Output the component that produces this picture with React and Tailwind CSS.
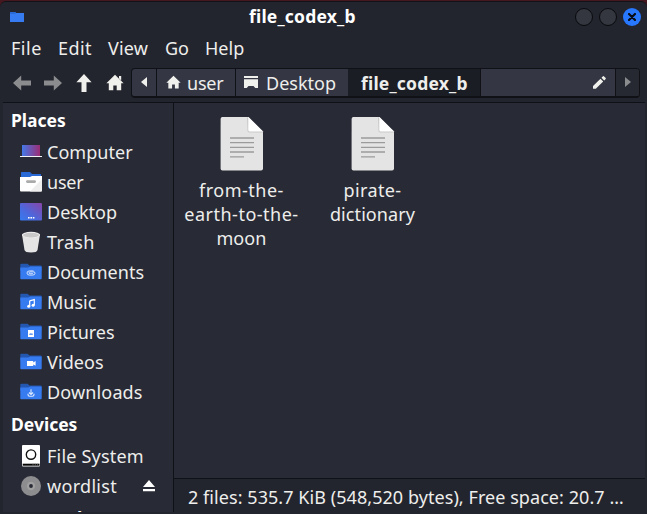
import React from "react";

function Folder({ children }) {
  return (
    <svg width="22" height="22" viewBox="0 0 22 22">
      <path d="M0.3 3.6Q0.3 2.8 1.1 2.8H7.6L9.5 4.4H20.8Q21.5 4.4 21.5 5.2V10H.3z" fill="#2457b0" />
      <path d="M0.3 6.6H8L10.4 5.4H21.7V17.6Q21.7 18.3 21 18.3H1Q.3 18.3 .3 17.6z" fill="#367bf0" />
      {children}
    </svg>
  );
}

const icons = {
  Computer: (
    <svg width="22" height="22" viewBox="0 0 22 22">
      <defs><linearGradient id="pc"><stop stopColor="#4478e8" /><stop offset="1" stopColor="#9c2d75" /></linearGradient></defs>
      <rect x="2" y="4" width="18" height="11" fill="url(#pc)" />
      <rect x="0" y="15" width="22" height="1" fill="#f4f4f4" />
    </svg>
  ),
  user: (
    <svg width="22" height="22" viewBox="0 0 22 22">
      <path d="M1 1.8Q1 1 1.8 1H10L12 3H21V8H1z" fill="#2869d6" />
      <path d="M0 6H10L12 5H22V19.5Q22 20.5 21 20.5H1Q0 20.5 0 19.5z" fill="#fff" />
      <path d="M22 8V19.5Q22 20.5 21 20.5H10z" fill="#eee" />
      <rect x="6" y="9.3" width="10" height="2.6" rx="1.3" fill="#aaa" />
    </svg>
  ),
  Desktop: (
    <svg width="22" height="22" viewBox="0 0 22 22">
      <defs><linearGradient id="dt" x1="0" y1="1" x2="1" y2="0"><stop stopColor="#367bf0" /><stop offset=".4" stopColor="#4c68dd" /><stop offset="1" stopColor="#8745a8" /></linearGradient></defs>
      <rect y="2" width="22" height="17.6" rx="1" fill="url(#dt)" />
      <path d="M8 16h1.6v1.6H8zM10.4 16H12v1.6h-1.6zM12.8 16h1.6v1.6h-1.6z" fill="#fff" />
    </svg>
  ),
  Trash: (
    <svg width="22" height="22" viewBox="0 0 22 22">
      <path d="M2 3.5L4.5 19Q5 21.5 11 21.5T17.5 19L20 3.5z" fill="#e5e5e5" />
      <ellipse cx="11" cy="3.8" rx="9" ry="3" fill="#f1f1f1" />
      <ellipse cx="11" cy="4.1" rx="8" ry="2.4" fill="#c9c9c9" />
    </svg>
  ),
  Documents: (
    <Folder><path d="M13.5 9.9H9.5Q7 9.9 7 12T9.5 14.1H12.5Q15 14.1 15 12.2T12.7 10.9H10Q9 10.9 9 11.8T10 12.7H13" fill="none" stroke="#dfeaff" strokeWidth=".9" /></Folder>
  ),
  Music: (
    <Folder><path d="M9.7 9.8L14.3 8.6V14.2M9.7 9.8V15.3" fill="none" stroke="#fff" strokeWidth="1.2" /><circle cx="8.7" cy="15.2" r="1.5" fill="#fff" /><circle cx="13.1" cy="14.2" r="1.5" fill="#fff" /></Folder>
  ),
  Pictures: (
    <Folder><rect x="8" y="9" width="6" height="7" fill="#fff" /><path d="M9 13.7L10.2 12.1L11 13L12 12L13 13.7z" fill="#367bf0" /></Folder>
  ),
  Videos: (
    <Folder><path d="M7 9.9H13.2V11.4L15.6 10.1V14.7L13.2 13.4V15H7z" fill="#fff" /></Folder>
  ),
  Downloads: (
    <Folder><path d="M11 8.3V13.4M9 11.5L11 13.5L13 11.5M8 12.8V13.5Q8 15.2 9.5 15.2H12.5Q14 15.2 14 13.5V12.8" fill="none" stroke="#dfeaff" strokeWidth="1.1" /></Folder>
  ),
  "File System": (
    <svg width="22" height="22" viewBox="0 0 22 22">
      <rect x="2" y="0" width="18" height="21.5" rx="1" fill="#fff" />
      <circle cx="11" cy="9.6" r="4.7" fill="none" stroke="#111" strokeWidth="1.4" />
      <rect x="2.7" y="18.7" width="16.8" height="2" fill="#050505" />
      <path d="M13 18.7v2M15.3 18.7v2M17.6 18.7v2" stroke="#777" strokeWidth=".7" />
    </svg>
  ),
  wordlist: (
    <svg width="22" height="22" viewBox="0 0 22 22">
      <circle cx="11" cy="11" r="10" fill="#8d8d90" /><circle cx="11" cy="11" r="4.2" fill="#a0a0a0" /><circle cx="11" cy="11" r="1.9" fill="#282a35" />
    </svg>
  ),
};

const places = [
  ["Computer", "tracking-[0.05px]"],
  ["user", "tracking-[-0.2px]"],
  ["Desktop", ""],
  ["Trash", "tracking-[0.35px]"],
  ["Documents", ""],
  ["Music", ""],
  ["Pictures", ""],
  ["Videos", "tracking-[0.1px]"],
  ["Downloads", "tracking-[0.15px]"],
];

function Place({ name, tracking, children }) {
  return (
    <div className="flex h-[30px] items-center pl-[17px]">
      <span className="w-[22px] shrink-0">{icons[name]}</span>
      <span className={`ml-[5px] ${tracking}`}>{name}</span>
      {children}
    </div>
  );
}

function Heading({ children }) {
  return <h2 className="flex h-[34px] items-center pl-[8px] text-[17.5px] font-bold text-white">{children}</h2>;
}

function Home({ chimney }) {
  return (
    <svg width="18" height="18" viewBox="0 0 18 18" fill="#f0f0ec">
      <path d="M9 .8L17.6 9.2H15.2V16.3H10.7V11.5H7.3V16.3H2.8V9.2H.4z" />
      {chimney && <path d="M13 2h2.2v4.5L13 4.4z" />}
    </svg>
  );
}

function Arrow({ turn, fill }) {
  return (
    <svg width="18" height="18" viewBox="0 0 18 18" className={turn} fill={fill}>
      <path d="M9 0L16.6 8.2H11.5V18H6.5V8.2H1.4z" />
    </svg>
  );
}

function File({ className, lines }) {
  return (
    <div className={className}>
      <svg width="44" height="56" viewBox="0 0 44 56">
        <path d="M2.4 1H28.5L43 15.5V52.6Q43 54.5 41.1 54.5H2.4Q.6 54.5 .6 52.6V3Q.6 1 2.4 1z" fill="#e4e4e4" />
        <path d="M27 1L27.5 14.8Q27.5 16.5 29.2 16.5H43V15.5z" fill="#c9c9c9" />
        <path d="M28.3 1L43 15.5H29.8Q28.3 15.5 28.3 14z" fill="#fff" />
        <path d="M10 22H34M10 26.7H34M10 31.3H34M10 36H34M10 40.8H24" stroke="#9b9b9b" strokeWidth="1.3" />
      </svg>
      <div className="mt-[6px] flex flex-col items-center leading-6 whitespace-nowrap">
        {lines.map(([text, style]) => <span key={text} className={style}>{text}</span>)}
      </div>
    </div>
  );
}

export default function App() {
  return (
    <div className="h-[514px] w-[647px] overflow-hidden bg-[#451820] pt-px font-['Noto_Sans',sans-serif] text-[18px] leading-6 text-[#eeeeec]">
      <div className="flex h-[513px] flex-col rounded-t-[6px] border-t border-[#111319] bg-[#23252e] pr-[2px] pl-[3px]">
        <header className="flex h-[30px] shrink-0 items-center pr-[4px] pl-[7px]">
          <svg width="14" height="12" viewBox="0 0 14 12"><path d="M0 1H5L6.2 2H14V11H0z" fill="#367bf0" /><path d="M0 1H5L6 2L5 3H0z" fill="#2869d6" /></svg>
          <h1 className="-mt-[2px] ml-[225px] w-[110px] text-[17.5px] font-bold tracking-[0.2px] whitespace-nowrap text-white">file_codex_b</h1>
          <div className="ml-auto flex gap-[6px]">
            <i className="size-[18px] rounded-full border border-[#090a0d] bg-[#343640]" />
            <i className="size-[18px] rounded-full border border-[#090a0d] bg-[#343640]" />
            <i className="flex size-[18px] items-center justify-center rounded-full bg-[#2777ff]">
              <svg width="8" height="8" viewBox="0 0 8 8"><path d="M1 1L7 7M7 1L1 7" stroke="#080d18" strokeWidth="2.2" strokeLinecap="round" /></svg>
            </i>
          </div>
        </header>
        <nav className="flex h-[31px] shrink-0 items-center pl-[8px]">
          <span className="w-[47px] tracking-[0.5px]">File</span>
          <span className="w-[50px] tracking-[0.4px]">Edit</span>
          <span className="w-[57px] tracking-[0.2px]">View</span>
          <span className="w-[40px]">Go</span>
          <span>Help</span>
        </nav>
        <div className="flex h-[40px] shrink-0 items-center border-b border-[#101116]">
          <div className="flex w-[128px] items-center gap-[13px] pl-[10px]">
            <Arrow turn="-rotate-90" fill="#8b8c8e" />
            <Arrow turn="rotate-90" fill="#8b8c8e" />
            <Arrow turn="" fill="#f0f0ec" />
            <Home chimney />
          </div>
          <div className="flex h-[30px] w-[509px] overflow-hidden rounded-[4px] border border-b-2 border-[#101116] bg-[#343743]">
            <span className="flex w-[25px] shrink-0 items-center justify-center border-r border-[#101116]">
              <svg width="6" height="10"><path d="M6 0V10L0 5z" fill="#f0f0ec" /></svg>
            </span>
            <span className="flex w-[79px] shrink-0 items-center border-r border-[#101116] pl-[9px]">
              <svg width="15" height="15" viewBox="0 0 18 18" fill="#f0f0ec"><path d="M9 .8L17.6 9.2H15.2V16.3H10.7V11.5H7.3V16.3H2.8V9.2H.4z" /></svg>
              <span className="mt-[2px] ml-[6px] tracking-[-0.2px]">user</span>
            </span>
            <span className="flex w-[113px] shrink-0 items-center border-r border-[#1b1d24] pl-[8px]">
              <svg width="14" height="14" viewBox="0 0 14 14" fill="#f0f0ec"><path d="M0 1H14V3H0zM0 4.3H14V13H11.3L9.5 11H4.5L2.7 13H0z" /></svg>
              <span className="mt-[2px] ml-[8px]">Desktop</span>
            </span>
            <span className="flex w-[132px] shrink-0 items-center border-r border-[#101116] bg-[#1b1d24] pt-[2px] pl-[12px] text-[17.5px] font-bold tracking-[0.2px]">file_codex_b</span>
            <span className="flex w-[135px] shrink-0 items-center justify-end border-r border-[#101116] pr-[9px]">
              <svg width="13" height="13" viewBox="0 0 13 13" fill="#f0f0ec"><path d="M0 10L7.5 2.7L10.2 5.4L2.8 12.8H0zM8.5 1.7L10 0.2Q10.4 0 10.8 .2L12.7 2.1Q13 2.5 12.7 3L11.2 4.4z" /></svg>
            </span>
            <span className="flex flex-1 items-center justify-center bg-[#262832]">
              <svg width="6" height="10"><path d="M0 0V10L6 5z" fill="#8b8c8e" /></svg>
            </span>
          </div>
        </div>
        <main className="flex min-h-0 flex-1">
          <aside className="h-[409px] w-[171px] shrink-0 overflow-hidden border-r border-[#101116] bg-[#282a35]">
            <Heading>Places</Heading>
            {places.map(([name, tracking]) => <Place key={name} name={name} tracking={tracking} />)}
            <Heading>Devices</Heading>
            <Place name="File System" tracking="tracking-[0.2px]" />
            <Place name="wordlist" tracking="tracking-[0.3px]">
              <svg width="12" height="12" viewBox="0 0 12 12" className="mr-[18px] ml-auto" fill="#fff"><path d="M6 0L12 7H0zM0 9H12V11.3H0z" /></svg>
            </Place>
            <Heading>Network</Heading>
          </aside>
          <section className="flex min-w-0 flex-1 flex-col">
            <div className="flex h-[376px] shrink-0 border-b border-[#101116] bg-[#282a35] pt-[13px]">
              <File className="flex w-[135px] flex-col items-center" lines={[["from-the-", "tracking-[0.5px]"], ["earth-to-the-", "tracking-[0.5px]"], ["moon", "tracking-[0.1px]"]]} />
              <File className="flex w-[127px] flex-col items-center" lines={[["pirate-", "tracking-[0.35px]"], ["dictionary", "tracking-[0.1px]"]]} />
            </div>
            <footer className="flex flex-1 items-center pl-[14px] tracking-[0.06px] whitespace-nowrap">2 files: 535.7 KiB (548,520 bytes), Free space: 20.7 …</footer>
          </section>
        </main>
      </div>
    </div>
  );
}
